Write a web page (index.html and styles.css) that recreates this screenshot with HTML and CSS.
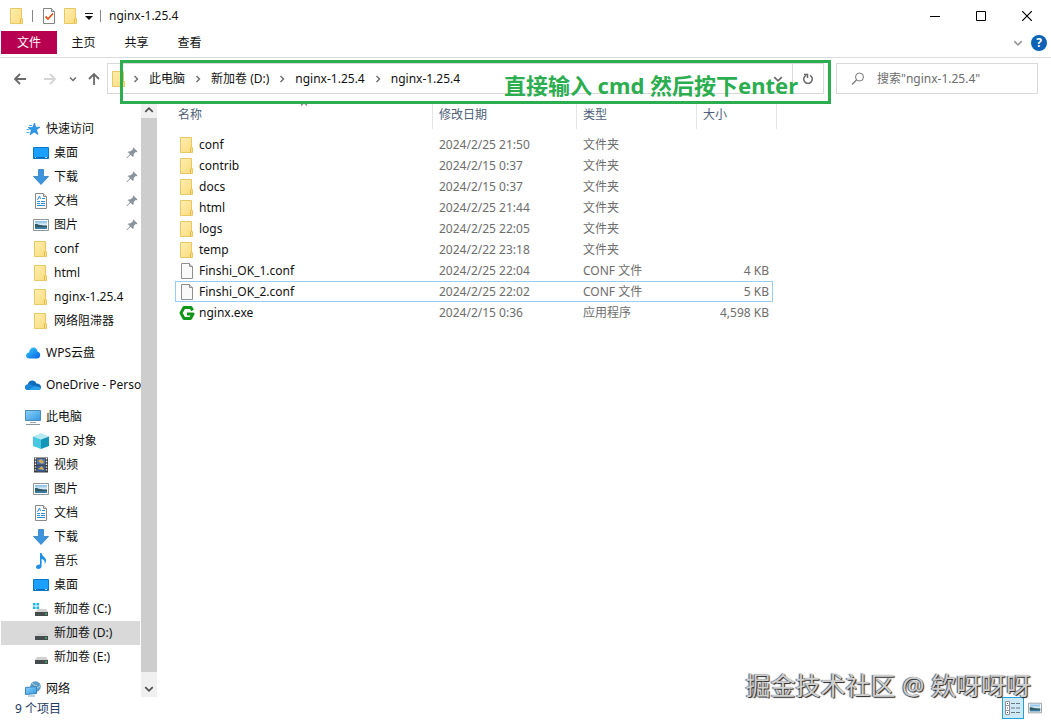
FILE: index.html
```html
<!DOCTYPE html>
<html lang="zh-CN">

<head>
    <meta charset="UTF-8">
    <meta name="viewport" content="width=device-width, initial-scale=1.0">
    <title>nginx-1.25.4</title>
    <link rel="stylesheet" href="styles.css">
</head>

<body>
    <!-- icons -->
    <svg class="sprite" aria-hidden="true">
        <defs>
            <linearGradient id="gFolder" x1="0" y1="0" x2="1" y2="1">
                <stop offset="0" stop-color="#ffeeb0" />
                <stop offset="1" stop-color="#fbdb7c" />
            </linearGradient>
            <linearGradient id="gScreen" x1="0" y1="0" x2="1" y2="1">
                <stop offset="0" stop-color="#8fd4fb" />
                <stop offset="1" stop-color="#2f97e0" />
            </linearGradient>
            <linearGradient id="gCloud" x1="0" y1="0" x2="1" y2="1">
                <stop offset="0" stop-color="#35d0fa" />
                <stop offset="1" stop-color="#0a5fe6" />
            </linearGradient>
            <linearGradient id="gPhoto" x1="0" y1="0" x2="0" y2="1">
                <stop offset="0" stop-color="#7db9e0" />
                <stop offset="0.5" stop-color="#e4f1f8" />
                <stop offset="0.6" stop-color="#3c6e80" />
                <stop offset="1" stop-color="#3f7fb0" />
            </linearGradient>
        </defs>
        <symbol id="folder" viewBox="0 0 16 16">
            <path d="M1.5.5h11v10h1v5h-12z" fill="url(#gFolder)" stroke="#e8c765" />
            <path d="M11.5 15v-3.5l1-1.5" fill="none" stroke="#dfb94c" />
        </symbol>
        <symbol id="file" viewBox="0 0 16 16">
            <path d="M2.5.5h8l3 3v12h-11z" fill="#f9f9f9" stroke="#8f8f8f" />
            <path d="M10.5.5v3h3" fill="#ddd" stroke="#8f8f8f" />
        </symbol>
        <symbol id="props" viewBox="0 0 16 16">
            <path d="M2.5.5h8l3 3v12h-11z" fill="#fff" stroke="#858585" />
            <path d="M10.5.5v3h3" fill="#ddd" stroke="#858585" />
            <path d="M4.5 8.5L7 11l5-5.500" fill="none" stroke="#e2571e" stroke-width="1.8" />
        </symbol>
        <symbol id="star" viewBox="0 0 16 16">
            <path d="M9.5 2l1.2 4.200H15l-3.500 2.600L13 13.500 9 11l-4 3 1.400-5L3 6.500h4.600z" fill="#2a9ae8" stroke="#1a78c8" stroke-width=".6" />
            <path d="M4 4.500h3M1.500 8.500h3M1.500 11.500h3" stroke="#48b0f0" />
        </symbol>
        <symbol id="desktop" viewBox="0 0 16 16">
            <path d="M.5 2.500h15v11H.5z" fill="#1aa0ff" stroke="#0c77c8" />
            <path d="M1 12.500h14" stroke="#0a6cb8" />
            <path d="M2 12.500h1M12 12.500h2" stroke="#bfe4ff" />
        </symbol>
        <symbol id="download" viewBox="0 0 16 16">
            <path d="M5.5.5h5v7h5l-7.500 8-7.500-8h5z" fill="#3c94dc" stroke="#2c7cc2" stroke-width=".8" />
        </symbol>
        <symbol id="doc" viewBox="0 0 16 16">
            <path d="M2.5.5h8l3 3v12h-11z" fill="#fff" stroke="#8a8a8a" />
            <path d="M10.5.5v3h3" fill="#ddd" stroke="#8a8a8a" />
            <path d="M4.500 7l2-4 1 3M9 5.500h3M4 8.500h3M8 8.500h4M4 10.500h3M8 10.500h4M4 12.500h8" fill="none" stroke="#2f8fd0" />
        </symbol>
        <symbol id="picture" viewBox="0 0 16 16">
            <path d="M.5 2.500h15v11H.5z" fill="#fff" stroke="#8e969c" />
            <path d="M2 4h12v8H2z" fill="url(#gPhoto)" />
            <path d="M2 7c4 0 6 2 12 2v1H2z" fill="#2e5b63" />
        </symbol>
        <symbol id="wps" viewBox="0 0 16 16">
            <path d="M4.500 13.500C2 13.500 1 12 1 10.500s1.500-3 3-3c.5-3.500 2.500-5 4.500-5s3.500 1.500 4 4c1.800.5 2.700 1.900 2.700 3.500 0 2-1.200 3.500-3.200 3.500z" fill="url(#gCloud)" />
        </symbol>
        <symbol id="onedrive" viewBox="0 0 16 16">
            <path d="M3 13c-2 0-3-1.300-3-2.800s1.200-2.700 2.800-2.800C3.400 5 5 3.500 7.200 3.500c2 0 3.500 1 4.300 2.900C14.200 6.400 16 7.700 16 10s-1.300 3-3 3z" fill="#0f6cbd" />
            <path d="M3 13l6.500-4 6.500 1.500c0 1.700-1.300 2.500-3 2.500z" fill="#2aa3ea" />
            <path d="M2.800 7.400c1.700-.4 2.700.2 6.700 1.600L3 13c-2 0-3-1.300-3-2.800s1.200-2.700 2.800-2.800z" fill="#1b86d8" />
        </symbol>
        <symbol id="pc" viewBox="0 0 16 16">
            <path d="M.5 1.500h15v10H.5z" fill="url(#gScreen)" stroke="#4c8ab8" />
            <path d="M5 13.500h6" stroke="#9aa7b0" />
            <path d="M1 15.500h14" stroke="#8a969e" />
        </symbol>
        <symbol id="cube" viewBox="0 0 16 16">
            <path d="M0 3.500L8 0l8 3.500-8 3z" fill="#b5eaf3" />
            <path d="M0 3.500l8 3V16l-8-3z" fill="#48c8e0" />
            <path d="M16 3.500l-8 3V16l8-3z" fill="#1295b8" />
        </symbol>
        <symbol id="video" viewBox="0 0 16 16">
            <path d="M1 .5h14v15H1z" fill="#3b3b3b" />
            <path d="M4 1.500h8v6H4z" fill="#4a78b4" />
            <path d="M4 8.500h8v6H4z" fill="#365f9c" />
            <path d="M5 4l3-2 3 3-2 2zM5 12l4-3 2 4z" fill="#d8a850" />
            <path d="M2.500 1v14M13.500 1v14" stroke="#eee" stroke-width="1.4" stroke-dasharray="1.4 1.4" />
        </symbol>
        <symbol id="music" viewBox="0 0 16 16">
            <path d="M7 0h1.600c.3 3.500 4.400 4 4.400 7.500 0 1.500-.6 2.500-1.300 3.300.4-3-1-4.300-3.100-4.800V13c0 1.700-1.500 3-3.300 3C3.800 16 3 15.100 3 14c0-1.500 1.500-2.700 4-2.600z" fill="#1f8fe6" />
        </symbol>
        <symbol id="drive" viewBox="0 0 16 16">
            <path d="M4 8h9l2 3H2z" fill="#d0d0d0" />
            <path d="M2 11h13v4H2z" fill="#464b4d" />
            <path d="M12 13h2" stroke="#3fe36a" />
        </symbol>
        <symbol id="windrive" viewBox="0 0 16 16">
            <path d="M5 8h8l2 3H2z" fill="#d0d0d0" />
            <path d="M2 11h13v4H2z" fill="#464b4d" />
            <path d="M12 13h2" stroke="#3fe36a" />
            <path d="M0 2h2.500v2.500H0zM3.500 2H6v2.500H3.500zM0 5.500h2.500V8H0zM3.500 5.500H6V8H3.500z" fill="#16b4e8" />
        </symbol>
        <symbol id="network" viewBox="0 0 16 16">
            <circle cx="10.500" cy="5.500" r="5.300" fill="#5d9cc6" />
            <path d="M7 2c2 1 2 3 5 3M10 10c0-3 3-3 5-5" fill="none" stroke="#b9dcef" />
            <path d="M.5 6.500l11-1v7l-11 1z" fill="url(#gScreen)" stroke="#3a83b8" />
            <path d="M3 15h7" stroke="#7fa6bf" />
        </symbol>
        <symbol id="nginx" viewBox="0 0 16 16">
            <path d="M13.500 5.500L12 2.500H5L2 8l3 5.500h6.500L14 9H8" fill="none" stroke="#0f9618" stroke-width="3" stroke-linejoin="round" />
        </symbol>
        <symbol id="pin" viewBox="0 0 12 12">
            <path d="M7.5.5l4 4-1 .8-.8-.2-2 2c.3 1.300 0 2.200-.8 3L4.600 7.800 1 11.300l-.6-.5L4 7.200 1.700 5c.9-.8 1.900-1 3-.8l2.200-2-.2-.8z" fill="#8b949a" />
        </symbol>
        <symbol id="left" viewBox="0 0 14 14">
            <path d="M13 7H2M7 2L2 7l5 5" fill="none" stroke="currentColor" stroke-width="1.8" />
        </symbol>
        <symbol id="chevron" viewBox="0 0 8 8">
            <path d="M1 2.500l3 3 3-3" fill="none" stroke="currentColor" stroke-width="1.4" />
        </symbol>
    </svg>

    <header class="titlebar">
        <svg class="icon"><use href="#folder" /></svg>
        <span class="bar"></span>
        <button type="button" class="tool" aria-label="属性"><svg class="icon"><use href="#props" /></svg></button>
        <button type="button" class="tool" aria-label="新建文件夹"><svg class="icon"><use href="#folder" /></svg></button>
        <button type="button" class="tool more" aria-label="自定义快速访问工具栏">
            <svg width="8" height="8" viewBox="0 0 8 8"><path d="M0 1.500h8" stroke="#111" /><path d="M0 4h8L4 8z" fill="#111" /></svg>
        </button>
        <span class="bar"></span>
        <h1 class="title">nginx-1.25.4</h1>
        <div class="window-buttons">
            <button type="button" aria-label="最小化"><svg width="10" height="10"><path d="M0 5.500h10" stroke="#000" /></svg></button>
            <button type="button" aria-label="最大化"><svg width="10" height="10"><path d="M.5.5h9v9h-9z" fill="none" stroke="#000" /></svg></button>
            <button type="button" aria-label="关闭"><svg width="10" height="10"><path d="M0 0l10 10M10 0L0 10" stroke="#000" stroke-width="1.2" /></svg></button>
        </div>
    </header>

    <nav class="ribbon">
        <button type="button" class="tab file-tab">文件</button>
        <button type="button" class="tab">主页</button>
        <button type="button" class="tab">共享</button>
        <button type="button" class="tab">查看</button>
        <button type="button" class="expand" aria-label="展开功能区"><svg width="10" height="10"><use href="#chevron" /></svg></button>
        <button type="button" class="help" aria-label="帮助">?</button>
    </nav>

    <div class="toolbar">
        <div class="history">
            <button type="button" aria-label="返回"><svg width="14" height="14"><use href="#left" /></svg></button>
            <button type="button" class="off" aria-label="前进"><svg class="flip" width="14" height="14"><use href="#left" /></svg></button>
            <button type="button" class="recent" aria-label="最近浏览的位置"><svg width="8" height="8"><use href="#chevron" /></svg></button>
            <button type="button" class="parent" aria-label="上移"><svg class="up" width="14" height="14"><use href="#left" /></svg></button>
        </div>
        <div class="address">
            <svg class="icon"><use href="#folder" /></svg>
            <ol class="crumbs">
                <li><svg class="next" width="8" height="8"><use href="#chevron" /></svg><a href="#">此电脑</a></li>
                <li><svg class="next" width="8" height="8"><use href="#chevron" /></svg><a href="#">新加卷 (D:)</a></li>
                <li><svg class="next" width="8" height="8"><use href="#chevron" /></svg><a href="#">nginx-1.25.4</a></li>
                <li><svg class="next" width="8" height="8"><use href="#chevron" /></svg><a href="#">nginx-1.25.4</a></li>
            </ol>
            <button type="button" class="drop" aria-label="以前的位置"><svg width="10" height="10"><use href="#chevron" /></svg></button>
            <button type="button" class="refresh" aria-label="刷新">
                <svg width="12" height="12" viewBox="0 0 12 12"><path d="M8 2.300A4.300 4.300 0 1 1 4 2.300" fill="none" stroke="#666" stroke-width="1.5" /><path d="M2 1.500h3.500V5" fill="none" stroke="#666" stroke-width="1.5" /></svg>
            </button>
        </div>
        <label class="search">
            <svg width="14" height="14" viewBox="0 0 14 14"><circle cx="8.5" cy="5" r="4" fill="none" stroke="#777" /><path d="M5.500 8L1 12.500" stroke="#777" stroke-width="1.2" /></svg>
            <input type="text" aria-label="搜索" placeholder='搜索"nginx-1.25.4"'>
        </label>
        <div class="callout">直接输入 cmd 然后按下enter</div>
    </div>

    <div class="content">
        <nav class="sidebar">
            <ul class="tree">
                <li><a href="#"><svg class="icon"><use href="#star" /></svg>快速访问</a>
                    <ul>
                        <li><a href="#"><svg class="icon"><use href="#desktop" /></svg>桌面<svg class="pin"><use href="#pin" /></svg></a></li>
                        <li><a href="#"><svg class="icon"><use href="#download" /></svg>下载<svg class="pin"><use href="#pin" /></svg></a></li>
                        <li><a href="#"><svg class="icon"><use href="#doc" /></svg>文档<svg class="pin"><use href="#pin" /></svg></a></li>
                        <li><a href="#"><svg class="icon"><use href="#picture" /></svg>图片<svg class="pin"><use href="#pin" /></svg></a></li>
                        <li><a href="#"><svg class="icon"><use href="#folder" /></svg>conf</a></li>
                        <li><a href="#"><svg class="icon"><use href="#folder" /></svg>html</a></li>
                        <li><a href="#"><svg class="icon"><use href="#folder" /></svg>nginx-1.25.4</a></li>
                        <li><a href="#"><svg class="icon"><use href="#folder" /></svg>网络阻滞器</a></li>
                    </ul>
                </li>
                <li><a href="#"><svg class="icon"><use href="#wps" /></svg>WPS云盘</a></li>
                <li><a href="#"><svg class="icon"><use href="#onedrive" /></svg>OneDrive - Perso</a></li>
                <li><a href="#"><svg class="icon"><use href="#pc" /></svg>此电脑</a>
                    <ul>
                        <li><a href="#"><svg class="icon"><use href="#cube" /></svg>3D 对象</a></li>
                        <li><a href="#"><svg class="icon"><use href="#video" /></svg>视频</a></li>
                        <li><a href="#"><svg class="icon"><use href="#picture" /></svg>图片</a></li>
                        <li><a href="#"><svg class="icon"><use href="#doc" /></svg>文档</a></li>
                        <li><a href="#"><svg class="icon"><use href="#download" /></svg>下载</a></li>
                        <li><a href="#"><svg class="icon"><use href="#music" /></svg>音乐</a></li>
                        <li><a href="#"><svg class="icon"><use href="#desktop" /></svg>桌面</a></li>
                        <li><a href="#"><svg class="icon"><use href="#windrive" /></svg>新加卷 (C:)</a></li>
                        <li><a href="#" class="current"><svg class="icon"><use href="#drive" /></svg>新加卷 (D:)</a></li>
                        <li><a href="#"><svg class="icon"><use href="#drive" /></svg>新加卷 (E:)</a></li>
                    </ul>
                </li>
                <li><a href="#"><svg class="icon"><use href="#network" /></svg>网络</a></li>
            </ul>
        </nav>
        <div class="scrollbar">
            <button type="button" aria-label="向上滚动"><svg class="turn" width="10" height="10"><use href="#chevron" /></svg></button>
            <div class="thumb"></div>
            <button type="button" class="down" aria-label="向下滚动"><svg width="10" height="10"><use href="#chevron" /></svg></button>
        </div>
        <main class="files">
            <table>
                <colgroup>
                    <col class="col-name">
                    <col class="col-date">
                    <col class="col-type">
                    <col class="col-size">
                </colgroup>
                <thead>
                    <tr>
                        <th>名称<svg class="sort turn" width="8" height="8"><use href="#chevron" /></svg></th>
                        <th>修改日期</th>
                        <th>类型</th>
                        <th>大小</th>
                    </tr>
                </thead>
                <tbody>
                    <tr>
                        <td><span class="name"><svg class="icon"><use href="#folder" /></svg>conf</span></td>
                        <td>2024/2/25 21:50</td>
                        <td>文件夹</td>
                        <td></td>
                    </tr>
                    <tr>
                        <td><span class="name"><svg class="icon"><use href="#folder" /></svg>contrib</span></td>
                        <td>2024/2/15 0:37</td>
                        <td>文件夹</td>
                        <td></td>
                    </tr>
                    <tr>
                        <td><span class="name"><svg class="icon"><use href="#folder" /></svg>docs</span></td>
                        <td>2024/2/15 0:37</td>
                        <td>文件夹</td>
                        <td></td>
                    </tr>
                    <tr>
                        <td><span class="name"><svg class="icon"><use href="#folder" /></svg>html</span></td>
                        <td>2024/2/25 21:44</td>
                        <td>文件夹</td>
                        <td></td>
                    </tr>
                    <tr>
                        <td><span class="name"><svg class="icon"><use href="#folder" /></svg>logs</span></td>
                        <td>2024/2/25 22:05</td>
                        <td>文件夹</td>
                        <td></td>
                    </tr>
                    <tr>
                        <td><span class="name"><svg class="icon"><use href="#folder" /></svg>temp</span></td>
                        <td>2024/2/22 23:18</td>
                        <td>文件夹</td>
                        <td></td>
                    </tr>
                    <tr>
                        <td><span class="name"><svg class="icon"><use href="#file" /></svg>Finshi_OK_1.conf</span></td>
                        <td>2024/2/25 22:04</td>
                        <td>CONF 文件</td>
                        <td>4 KB</td>
                    </tr>
                    <tr class="focused">
                        <td><span class="name"><svg class="icon"><use href="#file" /></svg>Finshi_OK_2.conf</span></td>
                        <td>2024/2/25 22:02</td>
                        <td>CONF 文件</td>
                        <td>5 KB</td>
                    </tr>
                    <tr>
                        <td><span class="name"><svg class="icon"><use href="#nginx" /></svg>nginx.exe</span></td>
                        <td>2024/2/15 0:36</td>
                        <td>应用程序</td>
                        <td>4,598 KB</td>
                    </tr>
                </tbody>
            </table>
        </main>
    </div>

    <footer class="status">
        <span>9 个项目</span>
        <div class="views">
            <button type="button" class="active" aria-label="详细信息">
                <svg width="16" height="14" viewBox="0 0 16 14"><path d="M.5.5h4v13h-4zM.5 4.500h4M.5 9.500h4" fill="#fff" stroke="#9a8f98" /><path d="M2 2.500h1M2 7h1M2 11.500h1" stroke="#555" /><path d="M6 2.500h4M11 2.500h4M6 7h4M11 7h4M6 11.500h4M11 11.500h4" stroke="#6b7780" /></svg>
            </button>
            <button type="button" aria-label="大缩略图"><svg width="14" height="14"><use href="#picture" /></svg></button>
        </div>
    </footer>

    <div class="watermark">掘金技术社区 @ 欸呀呀呀</div>
</body>

</html>
```
FILE: styles.css
```css
*,
*::after,
*::before {
    box-sizing: border-box;
}

body {
    margin: 0;
    height: 100vh;
    display: flex;
    flex-direction: column;
    position: relative;
    overflow: hidden;
    background-color: #fff;
    color: #111;
    font-family: "Noto Sans", "Noto Sans CJK SC", sans-serif;
    font-size: 12px;
    line-height: 20px;
}

button {
    display: flex;
    align-items: center;
    justify-content: center;
    padding: 0;
    border: 0;
    background: none;
    color: inherit;
    font: inherit;
}

a {
    color: inherit;
    text-decoration: none;
}

ul,
ol {
    margin: 0;
    padding: 0;
    list-style: none;
}

svg {
    display: block;
    flex: none;
}

.sprite {
    position: absolute;
    width: 0;
    height: 0;
}

.icon {
    width: 16px;
    height: 16px;
}

.flip {
    transform: scaleX(-1);
}

.up {
    transform: rotate(90deg);
}

.next {
    transform: rotate(-90deg);
}

.turn {
    transform: rotate(180deg);
}

/* title bar */
.titlebar {
    display: flex;
    align-items: center;
    height: 31px;
    padding-left: 9px;
}

.bar {
    width: 1px;
    height: 12px;
    margin: 0 8px 0 7px;
    background-color: #888;
}

.tool {
    width: 16px;
    margin-right: 6px;
}

.tool.more {
    width: 8px;
    margin: 0;
}

.title {
    margin: 0;
    font-size: 12px;
    font-weight: normal;
}

.window-buttons {
    display: flex;
    margin: 0 1px 0 auto;
}

.window-buttons button {
    width: 46px;
    height: 30px;
}

/* ribbon */
.ribbon {
    display: flex;
    align-items: center;
    height: 27px;
    padding: 0 4px 3px 1px;
    border-bottom: 1px solid #dadbdc;
}

.tab {
    width: 53px;
    height: 23px;
}

.file-tab {
    width: 56px;
    background-color: #b7004f;
    color: #fff;
}

.expand {
    width: 26px;
    height: 16px;
    margin-left: auto;
    color: #999;
}

.help {
    width: 16px;
    height: 16px;
    border-radius: 50%;
    background-color: #0b63b5;
    color: #fff;
    font-weight: bold;
}

/* navigation and address */
.toolbar {
    display: flex;
    position: relative;
    height: 44px;
    padding: 5px 13px 8px 5px;
    color: #6a6a6a;
}

.history {
    display: flex;
    width: 102px;
}

.history button {
    width: 30px;
    height: 31px;
}

.history .off {
    color: #d4d4d4;
}

.history .recent {
    width: 16px;
}

.history .parent {
    width: 26px;
}

.address {
    display: flex;
    align-items: center;
    flex: 1;
    padding-left: 3px;
    border: 1px solid #d9d9d9;
}

.crumbs {
    display: flex;
    flex: 1;
    color: #111;
}

.crumbs li {
    display: flex;
    align-items: center;
}

.crumbs svg {
    margin: 0 9px;
    color: #6a6a6a;
}

.crumbs li:first-child svg {
    margin-left: 5px;
}

.drop {
    width: 28px;
    height: 29px;
}

.refresh {
    width: 31px;
    height: 29px;
    border-left: 1px solid #d9d9d9;
}

.search {
    display: flex;
    align-items: center;
    width: 202px;
    margin-left: 12px;
    padding-left: 14px;
    border: 1px solid #d9d9d9;
}

.search input {
    flex: 1;
    min-width: 0;
    margin-left: 12px;
    padding: 0;
    border: 0;
    outline: 0;
    background: none;
    font: inherit;
}

.search input::placeholder {
    color: #6d6d6d;
}

.callout {
    position: absolute;
    top: 2px;
    left: 120px;
    right: 220px;
    z-index: 2;
    height: 44px;
    padding: 5px 30px 0 0;
    border: 3px solid #2bad50;
    color: #2bad50;
    font-size: 22px;
    font-weight: bold;
    line-height: 34px;
    text-align: right;
    pointer-events: none;
}

/* sidebar */
.content {
    display: flex;
    flex: 1;
    min-height: 0;
}

.sidebar {
    width: 141px;
    padding: 15px 1px 0;
    overflow: hidden;
}

.tree {
    display: flex;
    flex-direction: column;
    gap: 8px;
}

.tree a {
    display: flex;
    align-items: center;
    gap: 5px;
    height: 24px;
    padding-left: 24px;
    white-space: nowrap;
}

.tree ul a {
    padding-left: 32px;
}

.tree .current {
    background-color: #d9d9d9;
}

.pin {
    width: 12px;
    height: 12px;
    margin: 0 2px 0 auto;
}

.scrollbar {
    display: flex;
    flex-direction: column;
    width: 16px;
    background-color: #f0f0f0;
    color: #505050;
}

.scrollbar button {
    height: 16px;
}

.scrollbar .down {
    height: 17px;
    margin-top: 8px;
}

.thumb {
    flex: 1;
    background-color: #cdcdcd;
}

/* file list */
.files {
    flex: 1;
    padding-left: 18px;
}

table {
    width: 598px;
    border-collapse: separate;
    border-spacing: 0;
    table-layout: fixed;
}

.col-name {
    width: 258px;
}

.col-date {
    width: 144px;
}

.col-type {
    width: 120px;
}

.col-size {
    width: 76px;
}

th {
    position: relative;
    height: 27px;
    padding: 0 6px 2px;
    border-right: 1px solid #e3e5e8;
    color: #4c607a;
    font-weight: normal;
    text-align: left;
}

th:first-child {
    padding-left: 3px;
}

/* the size header reaches past the rows */
th:last-child {
    border-right: 0;
}

th:last-child::after {
    content: "";
    position: absolute;
    top: 0;
    right: -4px;
    width: 1px;
    height: 100%;
    background-color: #e3e5e8;
}

.sort {
    position: absolute;
    top: -2px;
    left: 125px;
    color: #888;
}

tbody::before {
    content: "";
    display: block;
    height: 5px;
}

td {
    height: 21px;
    padding: 0 6px;
    color: #6d6d6d;
}

td:first-child {
    padding-left: 4px;
    color: #111;
}

td:last-child {
    padding-right: 4px;
    text-align: right;
}

.name {
    display: flex;
    align-items: center;
    gap: 4px;
}

.focused {
    outline: 1px solid #99cdf0;
    outline-offset: -1px;
}

/* status bar */
.status {
    display: flex;
    justify-content: space-between;
    height: 24px;
    padding: 0 5px 0 15px;
    color: #1e3a5f;
    line-height: 24px;
}

.views {
    display: flex;
}

.views button {
    width: 22px;
    height: 22px;
}

.views .active {
    border: 1px solid #26a0da;
    background-color: #cde9f6;
}

.watermark {
    position: absolute;
    right: 20px;
    bottom: 21px;
    color: #cfcfcf;
    font-size: 25px;
    line-height: 30px;
    text-shadow: 1px 1px 1px #222, -1px 0 1px #555;
    pointer-events: none;
}
```
